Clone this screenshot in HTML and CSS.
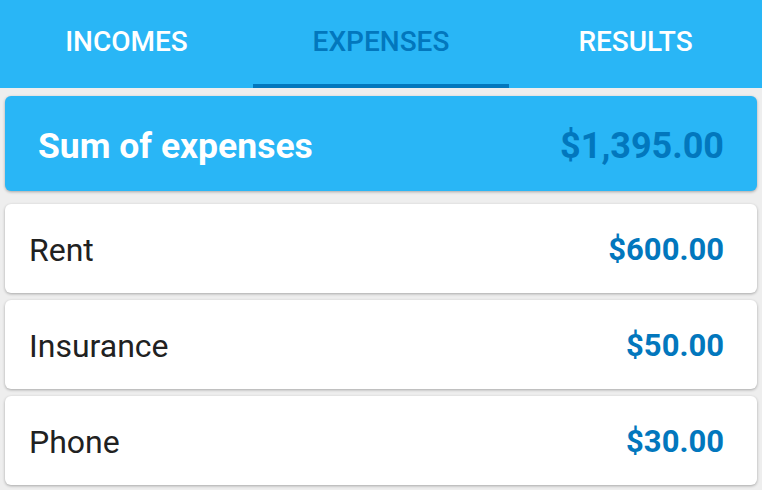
FILE: index.html
```html
<!DOCTYPE html>
<html>
<head>
<meta charset="utf-8">
<link rel="stylesheet" href="styles.css">
</head>
<body>
<div class="app">
  <nav class="tabs">
    <div class="tab">INCOMES</div>
    <div class="tab active">EXPENSES</div>
    <div class="tab">RESULTS</div>
  </nav>
  <main class="content">
    <section class="sum-card">
      <span class="sum-title">Sum of expenses</span>
      <span class="sum-amount">$1,395.00</span>
    </section>
    <ul class="list">
      <li class="row"><span class="row-name">Rent</span><span class="row-amount">$600.00</span></li>
      <li class="row"><span class="row-name">Insurance</span><span class="row-amount">$50.00</span></li>
      <li class="row"><span class="row-name">Phone</span><span class="row-amount">$30.00</span></li>
    </ul>
  </main>
</div>
</body>
</html>
```

FILE: styles.css
```css
* { box-sizing: border-box; }
html, body { margin: 0; padding: 0; }
body {
  width: 762px;
  height: 490px;
  overflow: hidden;
  background: #eeeeee;
  font-family: Roboto, "Liberation Sans", sans-serif;
}
.tabs {
  display: grid;
  grid-template-columns: 253px 256px 253px;
  height: 88px;
  background: #29b6f6;
}
.tab {
  display: flex;
  align-items: center;
  justify-content: center;
  padding-bottom: 1px;
  color: #ffffff;
  font-size: 28px;
  font-weight: 500;
  border-bottom: 4px solid transparent;
}
.tab.active {
  color: #0277bd;
  border-bottom-color: #0277bd;
}
.content {
  padding: 8px 5px 0;
}
.sum-card {
  display: flex;
  align-items: center;
  justify-content: space-between;
  height: 95px;
  padding: 5px 33px 0 33px;
  background: #29b6f6;
  border-radius: 6px;
  box-shadow: 0 1px 3px rgba(0,0,0,0.3);
}
.sum-title {
  color: #ffffff;
  font-size: 35.5px;
  font-weight: 700;
}
.sum-amount {
  color: #0277bd;
  font-size: 36px;
  font-weight: 700;
}
.list {
  list-style: none;
  margin: 13px 0 0;
  padding: 0;
  display: flex;
  flex-direction: column;
  gap: 7px;
}
.row {
  display: flex;
  align-items: center;
  justify-content: space-between;
  height: 89px;
  padding: 2px 33px 0 24px;
  background: #ffffff;
  border-radius: 6px;
  box-shadow: 0 1px 3px rgba(0,0,0,0.3);
}
.row-name {
  color: #212121;
  font-size: 32px;
}
.row-amount {
  color: #0277bd;
  font-size: 31px;
  font-weight: 700;
}
```
